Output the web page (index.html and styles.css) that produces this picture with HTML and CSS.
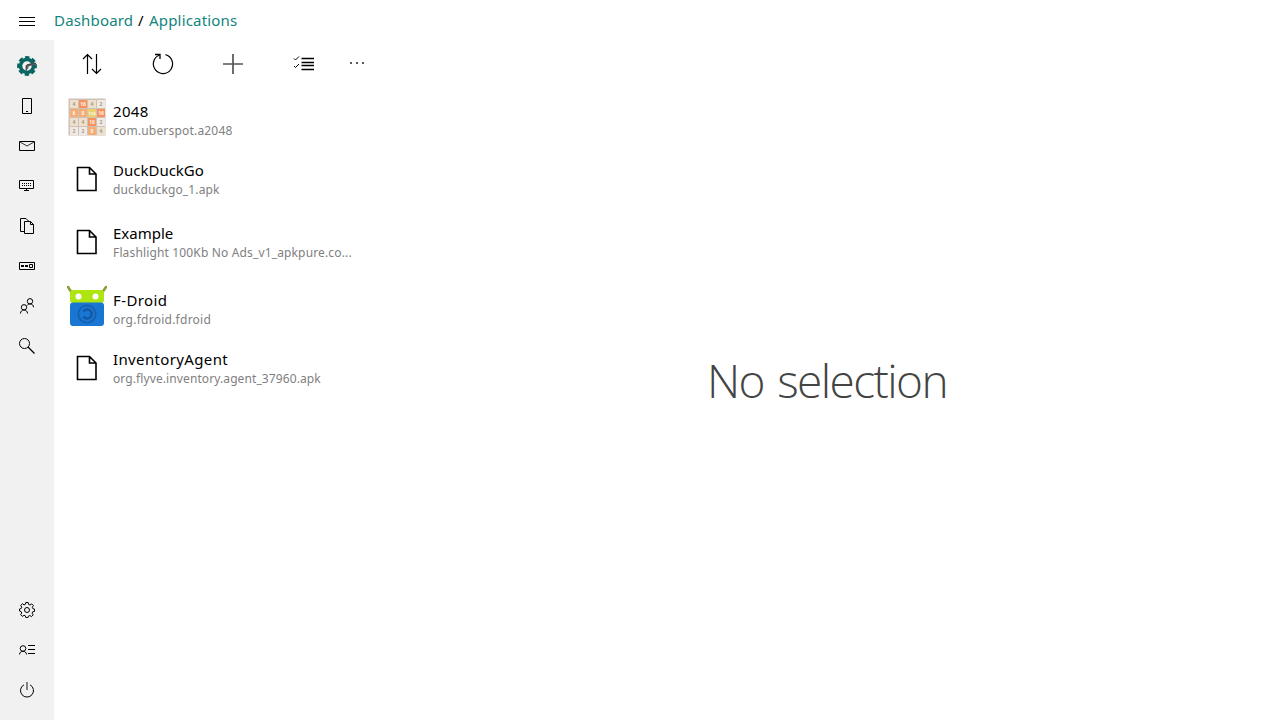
FILE: index.html
```
<!DOCTYPE html>
<html lang="en">
<head>
<meta charset="utf-8">
<title>Applications</title>
<link rel="stylesheet" href="styles.css">
</head>
<body>
<header class="topbar">
  <button class="nav-btn" aria-label="Menu"><svg width="16" height="16"><path d="M0 4.5h16M0 8.5h16M0 12.5h16"/></svg></button>
  <nav class="crumbs"><a class="c-dash">Dashboard</a><span class="slash">/</span><a class="c-apps">Applications</a></nav>
</header>
<div class="body">
  <aside class="sidebar">
    <div class="group">
      <button class="nav-btn"><svg width="22" height="22" viewBox="0 0 22 22"><circle cx="11" cy="11" r="8.700" fill="none" stroke="#086561" stroke-width="2.400" stroke-dasharray="4.400 2.433" stroke-dashoffset="2.200"/><circle cx="11" cy="11" r="6.500" fill="#f4f4f4" stroke="#086561" stroke-width="3.600"/><path d="M10 16v-5.500l2-1.500L20 7.800v1.700L12.500 11.500V13z" fill="#666" stroke="none"/><path d="M10.200 15.500v-4.500l2-1.500L20 8.500" stroke="#444" stroke-width="1.200"/></svg></button>
      <button class="nav-btn"><svg width="16" height="16"><path d="M3.500.5h9v15h-9z"/><path d="M7 13.500h2"/></svg></button>
      <button class="nav-btn"><svg width="16" height="16"><path d="M.5 3.500h15v9H.5z"/><path d="M1 4l7 4 7-4" stroke="#333"/></svg></button>
      <button class="nav-btn"><svg width="16" height="16"><path d="M.5 2.500h14v8H.5zM5 12.500h5M7.500 11v2"/><path d="M3 5.500h10M3 7.500h10" stroke-dasharray="1 1"/></svg></button>
      <button class="nav-btn"><svg width="16" height="16"><path d="M5 13.500H1.500V.5h5.500l3 3"/><path d="M5.500 3.500h6l3 3v9h-9zM11.500 3.500v3h3"/></svg></button>
      <button class="nav-btn"><svg width="16" height="16"><path d="M.5 4.500h15v7H.5z"/><path d="M2 8h3M6 8h3" stroke-width="2"/><path d="M10.500 6.500h3v3h-3z"/></svg></button>
      <button class="nav-btn"><svg width="16" height="16"><circle cx="11" cy="3.300" r="2.700"/><circle cx="5" cy="9.300" r="2.700"/><path d="M1.500 15.500c0-4.700 7-4.700 7 0M8 7.500c1.500-2.500 6.500-2 6.500 1.800"/></svg></button>
      <button class="nav-btn"><svg width="16" height="16"><circle cx="5.500" cy="5.500" r="5"/><path d="M9 9l6.500 6.500" stroke-width="1.300"/></svg></button>
    </div>
    <div class="group">
      <button class="nav-btn"><svg width="16" height="16"><path d="M6.800.5h2.400l.4 1.900 1.400.6 1.700-1.100 1.700 1.700-1.100 1.700.6 1.400 1.600.4v2.300l-1.800.4-.6 1.400 1.100 1.700-1.700 1.700-1.700-1.100-1.400.6-.4 1.500H6.800l-.4-1.700-1.400-.6-1.700 1.100-1.700-1.700 1.100-1.700-.6-1.400L.5 9V7l1.700-.5.600-1.400-1.100-1.700 1.700-1.700L5 2.900l1.400-.6z"/><circle cx="8" cy="8" r="2.500"/></svg></button>
      <button class="nav-btn"><svg width="16" height="16"><circle cx="4" cy="6.500" r="2.800"/><path d="M.5 12.500c0-4.300 7-4.300 7 0M9 3.500h7M9 7.500h7M9 11.500h7"/></svg></button>
      <button class="nav-btn"><svg width="16" height="16"><path d="M5 2.800a6.500 6.500 0 1 0 6 0"/><path d="M8 0v8" stroke="#666" stroke-width="1.600"/></svg></button>
    </div>
  </aside>
  <section class="list">
    <div class="toolbar">
      <button><svg width="20" height="22"><path d="M5.500 21V1.500M1 6l4.500-4.500L10 6M14.500 1v19.500M10 16l4.500 4.500L19 16" stroke-width="1.200"/></svg></button>
      <button><svg width="22" height="22"><path d="M13.500 1.700A9.600 9.600 0 1 1 7.500 2" stroke-width="1.200"/><path d="M3 1.500h5V6" stroke-width="1.300"/></svg></button>
      <button><svg width="22" height="22"><path d="M11 1v20M1 11h20" stroke="#555" stroke-width="1.700"/></svg></button>
      <button><svg width="22" height="22"><path d="M8.500 5.500H21M8.500 9.500H21M8.500 12.500H21M8.500 16.500H21" stroke-width="1.300"/><path d="M1 5.500L2.500 7 6 3.500M1 13l1.500 1.500L6 11"/></svg></button>
      <button class="more" aria-label="More"><svg width="16" height="4"><path d="M1 2h2M7 2h2M13 2h2" stroke="#222" stroke-width="1.700"/></svg></button>
    </div>
    <ul class="apps">
      <li class="app h59"><div class="thumb image"><svg width="40" height="40">
        <rect x="1.500" y="1.500" width="37" height="37" fill="#cec2b7" stroke="none"/>
        <g stroke="none">
        <path fill="#eee0cb" d="M3 3h8v8H3zM21 3h8v8h-8zM3 21h8v8H3zM12 21h8v8h-8zM30 30h8v8h-8z"/>
        <path fill="#f1eae4" d="M30 3h8v8h-8zM30 21h8v8h-8zM3 30h8v8H3zM12 30h8v8h-8z"/>
        <path fill="#f7925f" d="M12 3h8v8h-8zM30 12h8v8h-8zM21 21h8v8h-8z"/>
        <path fill="#f5ad75" d="M3 12h8v8H3zM12 12h8v8h-8zM21 30h8v8h-8z"/>
        <path fill="#ead16f" d="M21 12h8v8h-8z"/></g>
        <g class="tile dark"><text x="7" y="9">4</text><text x="25" y="9">4</text><text x="34" y="9">2</text><text x="7" y="27">4</text><text x="16" y="27">4</text><text x="34" y="27">2</text><text x="7" y="36">2</text><text x="16" y="36">2</text><text x="34" y="36">4</text></g>
        <g class="tile light"><text x="16" y="9">16</text><text x="7" y="18">8</text><text x="16" y="18">8</text><text x="25" y="18" class="wide">128</text><text x="34" y="18">16</text><text x="25" y="27">16</text><text x="25" y="36">8</text></g>
      </svg></div><div class="info"><div class="name n1">2048</div><div class="pkg p1">com.uberspot.a2048</div></div></li>
      <li class="app h63"><div class="thumb"><svg width="22" height="26"><path d="M1.500 1.500h12l6.500 6.500V24.500H1.500zM13.500 2v6H20" stroke-width="1.600"/></svg></div><div class="info"><div class="name">DuckDuckGo</div><div class="pkg p2">duckduckgo_1.apk</div></div></li>
      <li class="app h67"><div class="thumb ex"><svg width="22" height="26"><path d="M1.500 1.500h12l6.500 6.500V24.500H1.500zM13.500 2v6H20" stroke-width="1.600"/></svg></div><div class="info"><div class="name">Example</div><div class="pkg p3">Flashlight 100Kb No Ads_v1_apkpure.co...</div></div></li>
      <li class="app h59"><div class="thumb image"><svg width="40" height="42">
        <path d="M1 2l4 6M39 2l-4 6" stroke="#879f36" stroke-width="2.600" stroke-linecap="round"/>
        <rect x="3" y="5" width="34" height="13" rx="3" fill="#aee510" stroke="none"/>
        <circle cx="11.500" cy="11.500" r="3" fill="#fff" stroke="none"/><circle cx="28.500" cy="11.500" r="3" fill="#fff" stroke="none"/>
        <rect x="3" y="17.500" width="34" height="23.500" rx="3" fill="#1976d2" stroke="none"/>
        <circle cx="20" cy="29" r="8.700" stroke="#1660ae" stroke-width="1.800"/><path d="M16.500 26.500a4.500 4.500 0 1 1 0 5" stroke="#1459a3" stroke-width="2.500"/>
      </svg></div><div class="info"><div class="name n4">F-Droid</div><div class="pkg p4">org.fdroid.fdroid</div></div></li>
      <li class="app h63"><div class="thumb"><svg width="22" height="26"><path d="M1.500 1.500h12l6.500 6.500V24.500H1.500zM13.500 2v6H20" stroke-width="1.600"/></svg></div><div class="info"><div class="name n5">InventoryAgent</div><div class="pkg p5">org.flyve.inventory.agent_37960.apk</div></div></li>
    </ul>
  </section>
  <main class="detail"><div class="empty">No selection</div></main>
</div>
</body>
</html>
```
FILE: styles.css
```
* { box-sizing: border-box; }
body { margin: 0; width: 1280px; height: 720px; overflow: hidden; display: flex; flex-direction: column; background: #fff; color: #000; font-family: "Noto Sans", "Open Sans", sans-serif; }
button { border: 0; padding: 0; margin: 0; background: none; display: flex; align-items: center; justify-content: center; }
svg { display: block; fill: none; stroke: #000; stroke-width: 1; }
.topbar { height: 40px; display: flex; align-items: center; flex: none; }
.nav-btn { width: 54px; height: 40px; }
.topbar .nav-btn { padding-top: 1px; }
.group:first-child { padding-top: 6px; }
.crumbs { display: flex; font-size: 15px; line-height: 20px; white-space: nowrap; letter-spacing: 0.180px; }
.crumbs a { color: #11857d; }
.c-dash { width: 84px; }
.slash { width: 11px; }
.body { flex: 1; display: flex; min-height: 0; }
.sidebar { width: 54px; background: #f1f1f1; display: flex; flex-direction: column; justify-content: space-between; padding-bottom: 10px; }
.list { width: 320px; }
.toolbar { height: 48px; display: flex; padding-left: 3px; }
.toolbar button { width: 70.500px; height: 48px; flex: none; }
.toolbar button:nth-child(1) { width: 70px; }
.toolbar button:nth-child(2) { width: 72px; }
.toolbar button:nth-child(3) { width: 68px; }
.toolbar button:nth-child(4) { width: 74px; }
.toolbar .more:last-child { width: 32px; padding-bottom: 2px; }
.apps { list-style: none; margin: 0; padding: 0; }
.app { display: flex; padding-left: 13px; }
.thumb { width: 40px; height: 100%; display: flex; align-items: center; justify-content: center; }
.image { padding-bottom: 2px; }
.h59 { height: 59px; }
.h63 { height: 63px; }
.h67 { height: 67px; }
.ex { height: 63px; }
.info { padding: 13px 0 0 6px; white-space: nowrap; }
.name { font-size: 15px; line-height: 20px; }
.n1 { letter-spacing: 0.350px; }
.n4 { letter-spacing: 0.400px; }
.n5 { letter-spacing: 0.360px; }
.pkg { font-size: 12px; line-height: 18px; padding-top: 1px; color: #808080; }
.p1 { letter-spacing: 0.190px; }
.p2 { letter-spacing: 0.130px; }
.p3 { letter-spacing: 0.150px; }
.p4 { letter-spacing: 0.250px; }
.p5 { letter-spacing: 0.100px; }
.tile { font: bold 5px "Open Sans", sans-serif; text-anchor: middle; stroke: none; }
.wide { font-size: 4px; }
.dark { fill: #a39b92; }
.light { fill: #fff3e6; }
.detail { flex: 1; display: flex; align-items: center; justify-content: center; }
.empty { font: 300 46px/64px "Open Sans", sans-serif; letter-spacing: -1.600px; word-spacing: 3px; color: #444; }
```
